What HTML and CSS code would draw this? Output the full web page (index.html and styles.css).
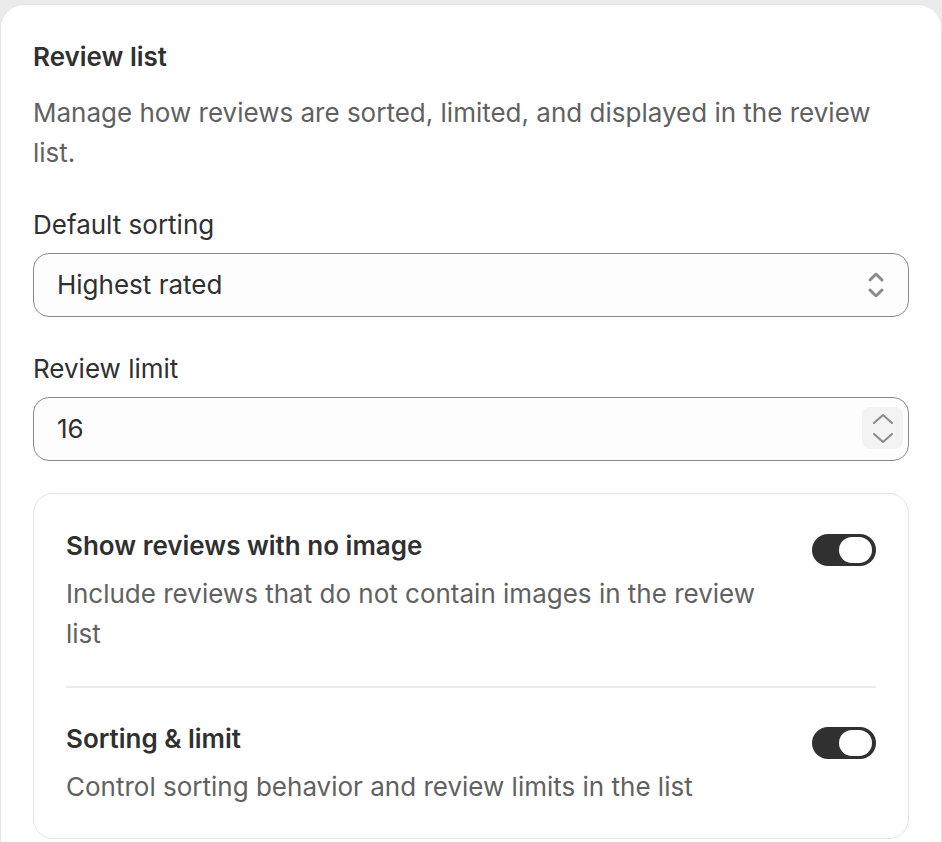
FILE: index.html
```html
<!DOCTYPE html>
<html lang="en">
<head>
<meta charset="utf-8">
<title>Review list</title>
<link rel="stylesheet" href="styles.css">
</head>
<body>
<div class="page">
  <section class="card">
    <div class="head">
      <h2 class="title">Review list</h2>
      <p class="desc">Manage how reviews are sorted, limited, and displayed in the review list.</p>
    </div>

    <div class="field">
      <label class="label">Default sorting</label>
      <div class="control select">
        <span class="value">Highest rated</span>
        <svg class="select-icon" viewBox="0 0 20 20" width="40" height="40" aria-hidden="true">
          <path d="M10.884 4.323a1.25 1.25 0 0 0-1.768 0l-2.646 2.647a.75.75 0 0 0 1.06 1.06l2.47-2.47 2.47 2.47a.75.75 0 1 0 1.06-1.06l-2.646-2.647Z"/>
          <path d="m13.53 13.03-2.646 2.647a1.25 1.25 0 0 1-1.768 0l-2.646-2.647a.75.75 0 0 1 1.06-1.06l2.47 2.47 2.470-2.47a.75.75 0 0 1 1.06 1.06Z"/>
        </svg>
      </div>
    </div>

    <div class="field">
      <label class="label">Review limit</label>
      <div class="control number">
        <span class="value">16</span>
        <div class="spinner">
          <svg viewBox="0 0 22 12" width="22" height="12" aria-hidden="true"><polyline points="2,10 11,2 20,10"/></svg>
          <svg viewBox="0 0 22 12" width="22" height="12" aria-hidden="true"><polyline points="2,2 11,10 20,2"/></svg>
        </div>
      </div>
    </div>

    <div class="inner">
      <div class="row">
        <div class="row-text">
          <h3 class="row-title">Show reviews with no image</h3>
          <p class="desc">Include reviews that do not contain images in the review list</p>
        </div>
        <span class="toggle"><span class="knob"></span></span>
      </div>
      <div class="divider"></div>
      <div class="row">
        <div class="row-text">
          <h3 class="row-title">Sorting &amp; limit</h3>
          <p class="desc">Control sorting behavior and review limits in the list</p>
        </div>
        <span class="toggle"><span class="knob"></span></span>
      </div>
    </div>
  </section>
</div>
</body>
</html>
```

FILE: styles.css
```css
* { box-sizing: border-box; }

html, body {
  margin: 0;
  height: 100%;
  overflow: hidden;
}

body {
  background: #ebebeb;
  font-family: Inter, "Noto Sans", "Liberation Sans", sans-serif;
  color: #303030;
  font-size: 26px;
  line-height: 40px;
}

.page {
  padding-top: 4px;
}

.card {
  background: #ffffff;
  border: 1px solid #e6e6e6;
  border-radius: 24px;
  padding: 32px 32px 32px 32px;
  display: flex;
  flex-direction: column;
  gap: 32px;
  min-height: 900px;
}

.head {
  display: flex;
  flex-direction: column;
  gap: 16px;
}

.title,
.row-title {
  margin: 0;
  font-size: 26px;
  line-height: 40px;
  font-weight: 600;
  color: #303030;
}

.desc {
  margin: 0;
  color: #616161;
  font-size: 26px;
  line-height: 40px;
}

.field {
  display: flex;
  flex-direction: column;
  gap: 8px;
}

.label {
  color: #303030;
}

.control {
  height: 64px;
  border: 1px solid #8a8a8a;
  border-radius: 16px;
  background: #fdfdfd;
  display: flex;
  align-items: center;
  padding-left: 23px;
}

.value {
  flex: 1;
  color: #303030;
}

.select {
  padding-right: 12px;
}

.select-icon {
  fill: #8a8a8a;
  display: block;
}

.number {
  padding-right: 5px;
}

.spinner {
  width: 41px;
  height: 42px;
  margin-top: -2px;
  background: #f3f3f3;
  border-radius: 8px;
  display: flex;
  flex-direction: column;
  align-items: center;
  justify-content: space-around;
  padding: 2px 0;
}

.spinner svg {
  display: block;
  fill: none;
  stroke: #8a8a8a;
  stroke-width: 2;
  stroke-linecap: round;
  stroke-linejoin: round;
}

.inner {
  border: 1px solid #e3e3e3;
  border-radius: 20px;
  padding: 32px 32px 31px 32px;
  display: flex;
  flex-direction: column;
  gap: 32px;
}

.row {
  display: flex;
  gap: 32px;
  align-items: flex-start;
}

.row-text {
  flex: 1;
  display: flex;
  flex-direction: column;
  gap: 8px;
}

.divider {
  height: 2px;
  margin-bottom: -1px;
  background: #ebebeb;
}

.toggle {
  flex: none;
  width: 64px;
  height: 32px;
  margin-top: 8px;
  border-radius: 16px;
  background: #303030;
  display: flex;
  align-items: center;
  justify-content: flex-end;
  padding-right: 4px;
}

.knob {
  width: 33px;
  height: 26px;
  border-radius: 13px;
  background: #ffffff;
}
```
